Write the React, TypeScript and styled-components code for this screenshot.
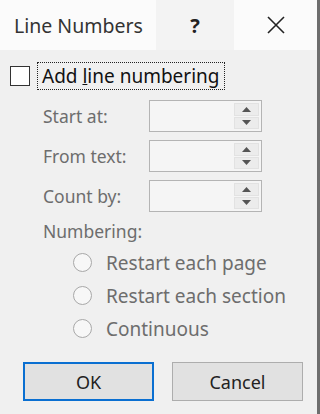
import React from 'react'
import styled, { createGlobalStyle } from 'styled-components'

const Global = createGlobalStyle`
  html, body { margin: 0; padding: 0; background: #f0f0f0; }
  * { box-sizing: border-box; }
`

const Dialog = () => {
  return (
    <Window>
      <Global />
      <TitleBar>
        <Title>Line Numbers</Title>
        <HelpButton>?</HelpButton>
        <CloseButton>
          <svg width="18" height="18" viewBox="0 0 18 18">
            <path d="M1 1 L17 17 M17 1 L1 17" stroke="#222" strokeWidth="1.6" fill="none" />
          </svg>
        </CloseButton>
      </TitleBar>
      <Body>
        <CheckRow>
          <CheckBox />
          <FocusLabel>Add <u>l</u>ine numbering</FocusLabel>
        </CheckRow>
        <Fields>
          {['Start at:', 'From text:', 'Count by:'].map((l) => (
            <React.Fragment key={l}>
              <FieldLabel>{l}</FieldLabel>
              <SpinBox>
                <SpinInput />
                <SpinButtons>
                  <SpinBtn>
                    <svg width="9" height="5" viewBox="0 0 9 5"><path d="M0 5 L4.5 0 L9 5Z" fill="#555" /></svg>
                  </SpinBtn>
                  <SpinBtn>
                    <svg width="9" height="5" viewBox="0 0 9 5"><path d="M0 0 L4.5 5 L9 0Z" fill="#555" /></svg>
                  </SpinBtn>
                </SpinButtons>
              </SpinBox>
            </React.Fragment>
          ))}
        </Fields>
        <GroupLabel>Numbering:</GroupLabel>
        <Radios>
          {['Restart each page', 'Restart each section', 'Continuous'].map((r) => (
            <RadioRow key={r}>
              <Radio />
              <span>{r}</span>
            </RadioRow>
          ))}
        </Radios>
        <Buttons>
          <Button primary>OK</Button>
          <Button>Cancel</Button>
        </Buttons>
      </Body>
    </Window>
  )
}

export default Dialog

const Window = styled.div`
width: 320px;
height: 414px;
background: #f0f0f0;
border-right: 3px solid #6e6e6e;
font-family: "Noto Sans", "Open Sans", sans-serif;
overflow: hidden;
`
const TitleBar = styled.div`
height: 50px;
background: #fbfbfb;
display: flex;
align-items: center;
`
const Title = styled.div`
flex: 1;
padding-left: 14px;
font-size: 19.5px;
color: #333;
`
const HelpButton = styled.div`
width: 78px;
height: 50px;
background: #f3f3f3;
display: flex;
align-items: center;
justify-content: center;
font-size: 20px;
font-weight: 700;
color: #222;
`
const CloseButton = styled.div`
width: 83px;
height: 50px;
display: flex;
align-items: center;
justify-content: center;
`
const Body = styled.div`
display: flex;
flex-direction: column;
padding: 12px 0 0 10px;
`
const CheckRow = styled.div`
display: flex;
align-items: center;
gap: 7px;
`
const CheckBox = styled.div`
width: 20px;
height: 20px;
border: 1.5px solid #333;
background: #fff;
`
const FocusLabel = styled.div`
border: 1px dotted #222;
padding: 0 4px;
height: 28px;
line-height: 26px;
font-size: 19px;
color: #111;
`
const Fields = styled.div`
display: grid;
grid-template-columns: 106px 113px;
grid-auto-rows: 32px;
row-gap: 8px;
margin: 10px 0 0 33px;
`
const FieldLabel = styled.div`
display: flex;
align-items: center;
font-size: 17.5px;
color: #6d6d6d;
`
const SpinBox = styled.div`
display: flex;
border: 1px solid #b4b4b4;
background: #f5f5f5;
padding: 2px;
`
const SpinInput = styled.div`
flex: 1;
`
const SpinButtons = styled.div`
width: 25px;
display: flex;
flex-direction: column;
gap: 1px;
`
const SpinBtn = styled.div`
flex: 1;
background: #ececec;
border: 1px solid #e2e2e2;
display: flex;
align-items: center;
justify-content: center;
`
const GroupLabel = styled.div`
margin: 7px 0 0 33px;
font-size: 17.5px;
color: #6d6d6d;
`
const Radios = styled.div`
display: flex;
flex-direction: column;
gap: 10px;
margin: 8px 0 0 63px;
`
const RadioRow = styled.div`
display: flex;
align-items: center;
gap: 14px;
font-size: 19px;
color: #6d6d6d;
height: 23px;
`
const Radio = styled.div`
width: 19px;
height: 19px;
border-radius: 50%;
border: 1px solid #a8a8a8;
background: #f7f7f7;
`
const Buttons = styled.div`
display: flex;
gap: 18px;
margin: 22px 0 0 13px;
`
const Button = styled.div<{ primary?: boolean }>`
width: 131px;
height: 39px;
display: flex;
align-items: center;
justify-content: center;
font-size: 18px;
color: #222;
background: #e1e1e1;
border: ${(p) => (p.primary ? '2px solid #0a6fd1' : '1px solid #adadad')};
`
